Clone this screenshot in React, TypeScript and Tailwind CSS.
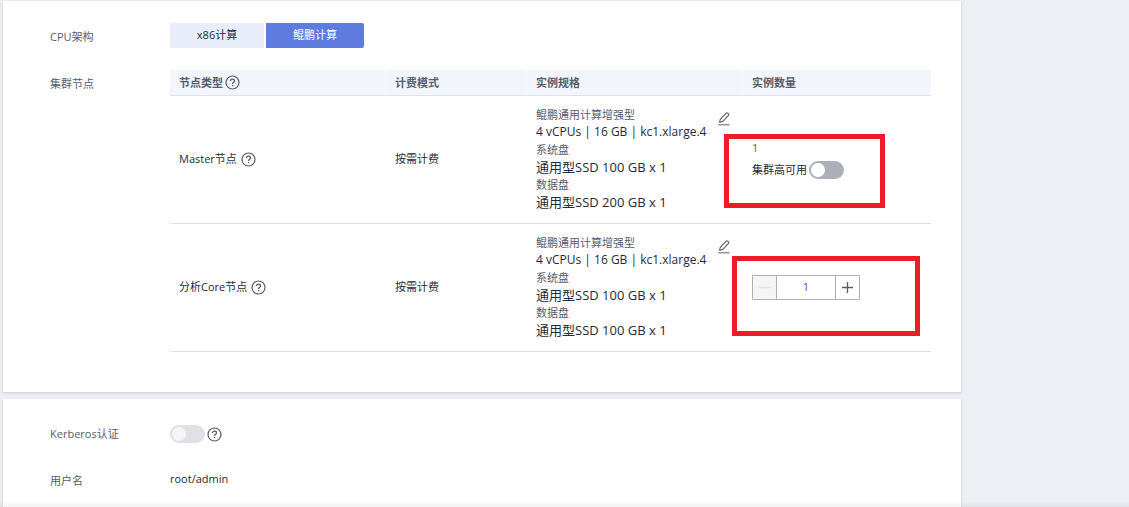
import { useState } from 'react';
import type { ReactNode } from 'react';

const nodes = [
  { id: 'master', name: 'Master节点', billing: '按需计费', systemDisk: '通用型SSD 100 GB x 1', dataDisk: '通用型SSD 200 GB x 1' },
  { id: 'core', name: '分析Core节点', billing: '按需计费', systemDisk: '通用型SSD 100 GB x 1', dataDisk: '通用型SSD 100 GB x 1' },
];

const HelpIcon = () => (
  <svg className="w-[15px] h-[15px] shrink-0 text-[#575d6c]" viewBox="0 0 15 15" fill="none" stroke="currentColor">
    <circle cx="7.5" cy="7.5" r="6.5" strokeWidth="1.2" />
    <path d="M5.5 6.1c0-1.2.8-2 2-2s2 .8 2 1.8c0 1.4-1.9 1.5-1.9 3" strokeWidth="1.3" />
    <path d="M7.6 9.9v1.3" strokeWidth="1.3" />
  </svg>
);

const EditIcon = () => (
  <svg className="w-3 h-[14px]" viewBox="0 0 12 14" fill="none" stroke="currentColor">
    <path d="M1.6 10.3l.6-3L8.3 1.2q.7-.6 1.4 0l.8.8q.6.7 0 1.4L4.5 9.6z" strokeWidth="1.1" strokeLinejoin="round" />
    <path d="M.2 12.7h11.3" stroke="#999" strokeWidth="1.6" />
  </svg>
);

type SwitchProps = {
  id: string;
  checked?: boolean;
  disabled?: boolean;
  onChange?: (checked: boolean) => void;
};

const Switch = ({ id, checked = false, disabled, onChange }: SwitchProps) => (
  <input
    id={id}
    type="checkbox"
    role="switch"
    checked={checked}
    disabled={disabled}
    onChange={(e) => onChange?.(e.target.checked)}
    className="appearance-none shrink-0 w-[35px] h-[18px] rounded-full p-[2px] bg-[#adb0b8] checked:bg-[#5e7ce0] disabled:bg-[#dfe1e6] before:block before:w-[14px] before:h-[14px] before:rounded-full before:bg-white disabled:before:bg-[#f5f5f6] checked:before:ml-auto"
  />
);

const FormRow = ({ label, htmlFor, children }: { label: string; htmlFor?: string; children: ReactNode }) => (
  <div className="flex items-start">
    <label htmlFor={htmlFor} className="w-[120px] shrink-0 leading-7 text-[#575d6c]">
      {label}
    </label>
    <div className="flex-1 min-w-0">{children}</div>
  </div>
);

const Stepper = ({ value, onChange }: { value: number; onChange: (value: number) => void }) => (
  <div className="flex w-[108px] h-[25px] border border-[#adb0b8] rounded-[1px] text-[#575d6c]">
    <button
      aria-label="减少"
      disabled={value <= 1}
      onClick={() => onChange(value - 1)}
      className="w-6 shrink-0 flex items-center justify-center border-r border-[#adb0b8] disabled:bg-[#f5f5f6] disabled:text-[#dfe1e6]"
    >
      <svg className="w-3 h-3" viewBox="0 0 12 12" stroke="currentColor" strokeWidth="1.4">
        <path d="M0 5.5h12" />
      </svg>
    </button>
    <input
      aria-label="实例数量"
      value={value}
      onChange={(e) => onChange(Math.max(1, Number(e.target.value) || 1))}
      className="flex-1 min-w-0 text-center outline-none"
    />
    <button
      aria-label="增加"
      onClick={() => onChange(value + 1)}
      className="w-6 shrink-0 flex items-center justify-center border-l border-[#adb0b8]"
    >
      <svg className="w-[11px] h-[11px]" viewBox="0 0 11 11" stroke="currentColor" strokeWidth="1.3">
        <path d="M0 5.5h11M5.5 0v11" />
      </svg>
    </button>
  </div>
);

const App = () => {
  const [arch, setArch] = useState('kunpeng');
  const [highAvailability, setHighAvailability] = useState(false);
  const [coreCount, setCoreCount] = useState(1);

  return (
    <div className="min-h-screen flex flex-col gap-[7px] pt-px pl-[3px] pr-[168px] bg-[#eeeff5] font-['Open_Sans','Noto_Sans_CJK_SC',sans-serif] text-[11px] text-[#252b3a]">
      {/* Cluster nodes */}
      <section className="flex flex-col gap-[19px] bg-white shadow-[0_1px_3px_rgba(0,0,0,0.15)] pt-[22px] pb-10 pl-[47px] pr-[30px]">
        <FormRow label="CPU架构">
          <div className="flex gap-[2px] h-7">
            <button
              onClick={() => setArch('x86')}
              className={`w-[94px] h-[25px] rounded-l-[2px] ${
                arch === 'x86' ? 'bg-[#5e7ce0] text-white' : 'bg-[#e9edfa]'
              }`}
            >
              x86计算
            </button>
            <button
              onClick={() => setArch('kunpeng')}
              className={`w-[98px] h-[25px] rounded-r-[2px] ${
                arch === 'kunpeng' ? 'bg-[#5e7ce0] text-white' : 'bg-[#e9edfa]'
              }`}
            >
              鲲鹏计算
            </button>
          </div>
        </FormRow>

        <FormRow label="集群节点">
          <table className="w-full table-fixed border-separate border-spacing-0 text-left">
            <colgroup>
              <col className="w-[215px]" />
              <col className="w-[141px]" />
              <col className="w-[216px]" />
              <col />
            </colgroup>
            <thead>
              <tr className="h-[26px] bg-[#f2f5fc] text-[#575d6c] leading-[25px]">
                <th className="p-0 pl-[9px] font-bold border-b border-[#dfe1e6]">
                  <span className="flex items-center gap-[2px]">
                    节点类型
                    <HelpIcon />
                  </span>
                </th>
                {['计费模式', '实例规格', '实例数量'].map((title) => (
                  <th key={title} className="p-0 pl-[9px] font-bold border-b border-b-[#dfe1e6] border-l border-l-white">
                    {title}
                  </th>
                ))}
              </tr>
            </thead>
            <tbody>
              {nodes.map((node) => (
                <tr key={node.id}>
                  <td className="p-0 pl-[9px] border-b border-[#dfe1e6]">
                    <span className="flex items-center gap-1">
                      {node.name}
                      <HelpIcon />
                    </span>
                  </td>
                  <td className="p-0 pl-[10px] border-b border-[#dfe1e6]">{node.billing}</td>
                  <td className="p-0 pl-[10px] border-b border-[#dfe1e6]">
                    <div className="flex items-start justify-between pt-[10px] pb-3 pr-3 whitespace-nowrap">
                      <dl>
                        <dt className="leading-[17px] text-[#575d6c]">鲲鹏通用计算增强型</dt>
                        <dd className="leading-[18px] text-[12px]">4 vCPUs | 16 GB | kc1.xlarge.4</dd>
                        <dt className="leading-[17px] text-[#575d6c]">系统盘</dt>
                        <dd className="leading-[18px] text-[13px]">{node.systemDisk}</dd>
                        <dt className="leading-[17px] text-[#575d6c]">数据盘</dt>
                        <dd className="leading-[18px] text-[13px]">{node.dataDisk}</dd>
                      </dl>
                      <button aria-label="修改规格" className="pt-[6px] text-[#575d6c]">
                        <EditIcon />
                      </button>
                    </div>
                  </td>
                  <td className="relative p-0 pl-[10px] border-b border-[#dfe1e6]">
                    {node.id === 'master' ? (
                      <>
                        <div className="pb-[2px] leading-[22px]">
                          <div className="text-[#575d6c]">1</div>
                          <div className="flex items-center gap-[2px]">
                            <label htmlFor="ha">集群高可用</label>
                            <Switch id="ha" checked={highAvailability} onChange={setHighAvailability} />
                          </div>
                        </div>
                        <div className="absolute -left-[18px] top-[38px] w-[161px] h-[74px] border-5 border-[#ee1c25] pointer-events-none" />
                      </>
                    ) : (
                      <>
                        <Stepper value={coreCount} onChange={setCoreCount} />
                        <div className="absolute -left-[10px] top-8 w-[188px] h-20 border-5 border-[#ee1c25] pointer-events-none" />
                      </>
                    )}
                  </td>
                </tr>
              ))}
            </tbody>
          </table>
        </FormRow>
      </section>

      {/* Authentication */}
      <section className="flex-1 flex flex-col gap-[19px] bg-white shadow-[0_1px_3px_rgba(0,0,0,0.15)] pt-[21px] pl-[47px] pr-[30px]">
        <FormRow label="Kerberos认证" htmlFor="kerberos">
          <div className="flex items-center gap-[2px] h-7">
            <Switch id="kerberos" disabled />
            <HelpIcon />
          </div>
        </FormRow>
        <FormRow label="用户名">
          <div className="leading-6">root/admin</div>
        </FormRow>
      </section>

      {/* Shadow above the bottom bar */}
      <div className="fixed inset-x-0 bottom-0 h-[6px] bg-linear-to-t from-black/5 to-transparent pointer-events-none" />
    </div>
  );
};

export default App;
